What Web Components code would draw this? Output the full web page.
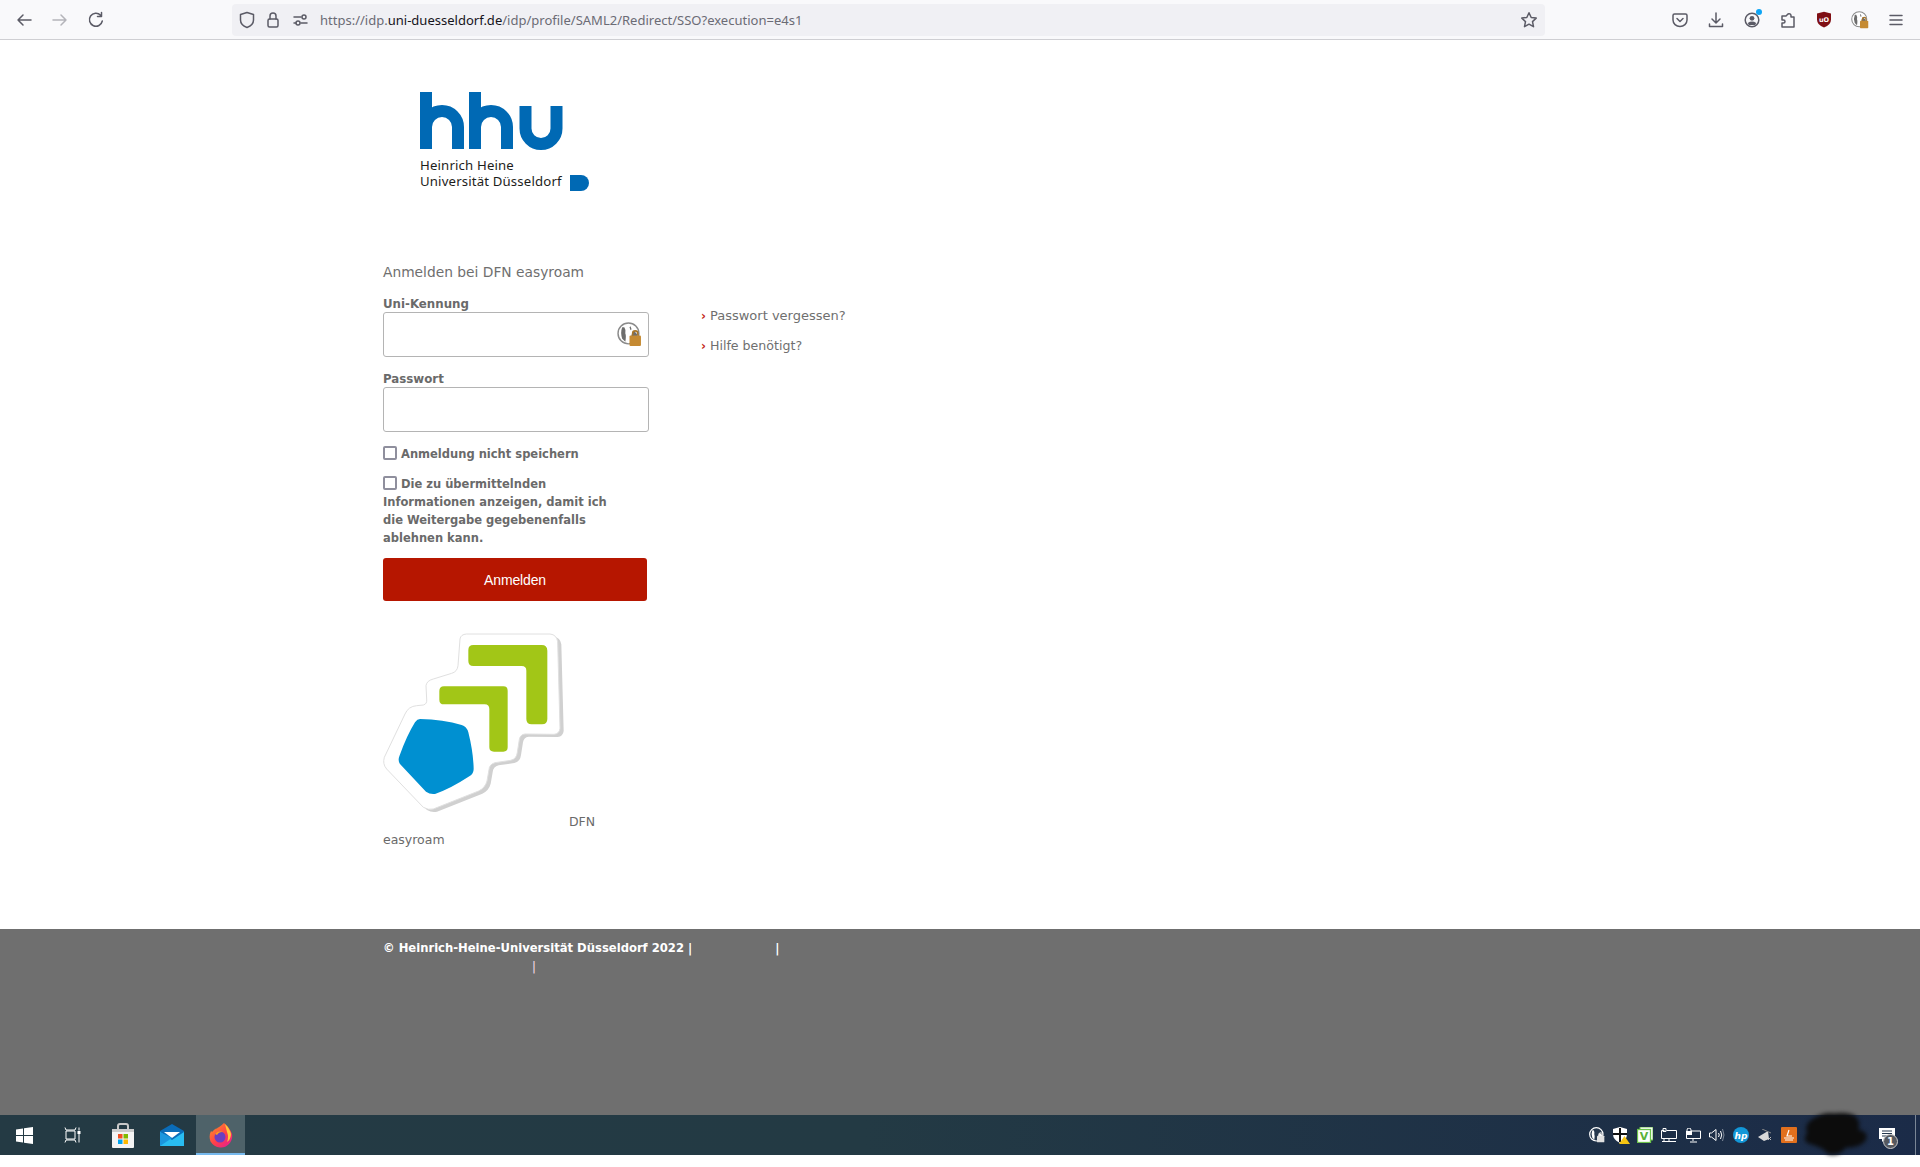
<!DOCTYPE html>
<html lang="de"><head><meta charset="utf-8"><title>Anmelden bei DFN easyroam</title>
<style>
html,body{margin:0;padding:0;background:#fff}
body{width:1920px;height:1167px;display:flex;flex-direction:column;overflow:hidden;font-family:"DejaVu Sans",Verdana,sans-serif}
</style></head><body>
<browser-toolbar></browser-toolbar>
<login-page>
  <hhu-logo></hhu-logo>
  <login-panel></login-panel>
</login-page>
<page-footer></page-footer>
<win-taskbar></win-taskbar>
<script>
function def(name, html){
  customElements.define(name, class extends HTMLElement{
    constructor(){super();const s=this.attachShadow({mode:'open'});const t=document.createElement('template');t.innerHTML=html;s.appendChild(t.content.cloneNode(true));}
  });
}
const S='fill="none" stroke="#5b5b66" stroke-width="1.5" stroke-linecap="round" stroke-linejoin="round"';
const lockPerson=(w)=>`<svg width="${w}" height="${w}" viewBox="0 0 24 24"><circle cx="11" cy="11" r="10" fill="#fff" stroke="#8b8b8b" stroke-width="1.4"/><path d="M5 5q-2 5 0 11l3 3q1-6 0-8q1-3-1-6zM13 4l1 3-1 1-1-3zM15 9q4 0 5 5v2h-7z" fill="#6d6d6d"/><rect x="12" y="13" width="11" height="10" rx="1" fill="#c58a32"/><path d="M15 13v-2a2.500 2.500 0 0 1 5 0v2" fill="none" stroke="#a87426" stroke-width="1.5"/></svg>`;

def('browser-toolbar',`<style>
:host{display:flex;flex:none;height:39px;background:#f9f9fb;border-bottom:1px solid #cfcfd3;align-items:center;box-sizing:content-box}
svg{display:block;flex:none}
.nav{display:flex;width:232px;padding-left:15px;box-sizing:border-box;gap:18px;align-items:center}
.url{flex:none;width:1313px;height:32px;background:#f0f0f4;border-radius:4px;display:flex;align-items:center;padding:0 0 0 7px;box-sizing:border-box}
.url .t{font:13.030px "Noto Sans",sans-serif;color:#6b6b75;margin-left:12px;white-space:nowrap}
.url b{font-weight:400;color:#15141a}
.url .star{margin-left:auto;margin-right:7px}
.right{flex:1;display:flex;padding-left:125px;gap:16px;align-items:center}
.right span{width:20px;height:20px;display:flex;justify-content:center;align-items:center;position:relative}
.dot{position:absolute;right:0;top:-1px;width:6px;height:6px;border-radius:50%;background:#0ea5f5}
</style>
<div class="nav">
<svg width="18" height="18" viewBox="0 0 18 18" ${S}><path d="M16 9H3M8 4 3 9l5 5"/></svg>
<svg width="18" height="18" viewBox="0 0 18 18" fill="none" stroke="#b4b4ba" stroke-width="1.5" stroke-linecap="round" stroke-linejoin="round"><path d="M2 9h13M10 4l5 5-5 5"/></svg>
<svg width="18" height="18" viewBox="0 0 18 18" ${S}><path d="M13.600 4.200A6.500 6.500 0 1 0 15.300 10M14.500 1.500v4h-4"/></svg>
</div>
<div class="url">
<svg width="16" height="18" viewBox="0 0 16 18" ${S} style="margin-right:12px"><path d="M8 1.500 14.500 3.500v5.500q0 5-6.500 7.500Q1.500 14 1.500 9V3.500z"/></svg>
<svg width="12" height="16" viewBox="0 0 12 16" ${S} style="margin-right:14px"><rect x="1" y="7" width="10" height="8" rx="1.500"/><path d="M3 7V4a3 3 0 0 1 6 0v3"/></svg>
<svg width="15" height="12" viewBox="0 0 15 12" ${S} stroke-width="1.200"><path d="M1 3h7M1 9h2M8 9h6"/><circle cx="11" cy="3" r="2"/><circle cx="5" cy="9" r="2"/></svg>
<span class="t">https://idp.<b>uni-duesseldorf.de</b>/idp/profile/SAML2/Redirect/SSO?execution=e4s1</span>
<svg class="star" width="18" height="18" viewBox="0 0 18 18" ${S}><path d="m9 1.800 2.200 4.700 5 .6-3.700 3.500 1 5.100L9 13.200l-4.500 2.500 1-5.100L1.800 7.100l5-.6z"/></svg>
</div>
<div class="right">
<span><svg width="16" height="16" viewBox="0 0 16 16" ${S}><path d="M2.500 2h11q1.500 0 1.500 1.500V8a7 6.500 0 0 1-14 0V3.500Q1 2 2.500 2zM5 6.500l3 3 3-3"/></svg></span>
<span><svg width="16" height="16" viewBox="0 0 16 16" ${S}><path d="M8 1v9.500M4 7l4 4 4-4M1.500 12v2.500h13V12"/></svg></span>
<span><svg width="16" height="16" viewBox="0 0 16 16"><circle cx="8" cy="8" r="6.800" fill="none" stroke="#5b5b66" stroke-width="1.500"/><circle cx="8" cy="6.300" r="2.400" fill="#5b5b66"/><path d="M3.800 11q4.200-2.800 8.400 0l-1 2H4.800z" fill="#5b5b66"/></svg><i class="dot"></i></span>
<span><svg width="16" height="16" viewBox="0 0 16 16" ${S}><path d="M6 4H2v4h1.500a1.500 1.500 0 0 1 0 3H2v4h12V5h-3V3.500a2 2 0 0 0-3-1.500L6 4z"/></svg></span>
<span><svg width="16" height="17" viewBox="0 0 16 17"><path d="M8 .8 15 2.500v6q0 5.500-7 8-7-2.500-7-8v-6z" fill="#7f0f14"/><text x="8" y="10.500" text-anchor="middle" font-family="DejaVu Sans" font-size="6.500" font-weight="700" fill="#fff">uO</text></svg></span>
<span>${lockPerson(18)}</span>
<span><svg width="14" height="12" viewBox="0 0 14 12" ${S}><path d="M1 1.500h12M1 6h12M1 10.500h12"/></svg></span>
</div>`);

def('login-page',`<style>
:host{display:block;flex:none;height:889px;box-sizing:border-box;padding-left:383px}
</style><slot></slot>`);

def('hhu-logo',`<style>
:host{display:block;padding:52px 0 0 37px;height:171px;box-sizing:content-box}
.row{display:flex;align-items:flex-end;gap:8px;margin-top:6px}
.t{font:13.200px/16px "Noto Sans",sans-serif;color:#1d1d1b;letter-spacing:.16px;white-space:nowrap}
svg{display:block}
.d{margin-bottom:-2px}
</style>
<svg width="143" height="59" viewBox="0 0 143 59" fill="none" stroke="#0069b4" stroke-width="12"><path d="M6 0V57M6 35A16 16 0 0 1 38 35V57M55 0V57M55 35A16 16 0 0 1 87 35V57M105.500 14V36.500A15.500 15.500 0 0 0 136.500 36.500V14"/></svg>
<div class="row"><div class="t">Heinrich Heine<br>Universität Düsseldorf</div>
<svg class="d" width="19" height="16" viewBox="0 0 19 16"><path d="M0 0H11A8 8 0 0 1 11 16H0z" fill="#0069b4"/></svg></div>`);

def('login-panel',`<style>
:host{display:block;color:#6a6a6a}
h1{font-size:13.800px;line-height:18px;font-weight:400;margin:0 0 14px;color:#6f6f6f}
.cols{display:flex}
.form{width:266px;flex:none}
.links{margin-left:52px;padding-top:12px}
</style>
<h1>Anmelden bei DFN easyroam</h1>
<div class="cols"><div class="form">
<text-field label="Uni-Kennung" data-lock></text-field>
<text-field label="Passwort" type="password"></text-field>
<check-field text="Anmeldung nicht speichern"></check-field>
<check-field text="Die zu übermittelnden Informationen anzeigen, damit ich die Weitergabe gegebenenfalls ablehnen kann." style="margin-bottom:11px"></check-field>
<login-button></login-button>
<easyroam-logo></easyroam-logo>
</div>
<div class="links"><help-links></help-links></div></div>`);

customElements.define('text-field',class extends HTMLElement{constructor(){super();const s=this.attachShadow({mode:'open'});
const lab=this.getAttribute('label'),typ=this.getAttribute('type')||'text',lk=this.hasAttribute('data-lock');
s.innerHTML=`<style>
:host{display:block;margin-bottom:13px}
label{display:block;font:700 11.800px/18px "DejaVu Sans",sans-serif;color:#6a6a6a;height:18px;margin-bottom:-1px}
.b{position:relative;height:45px}
input{display:block;width:266px;height:45px;box-sizing:border-box;border:1px solid #b4b4b4;border-radius:3px;background:#fff;margin:0;padding:0 8px;outline:none}
.i{position:absolute;right:7px;top:10px}
</style><label>${lab}</label><div class="b"><input type="${typ}">${lk?`<div class="i">${lockPerson(25)}</div>`:''}</div>`;}});

customElements.define('check-field',class extends HTMLElement{constructor(){super();const s=this.attachShadow({mode:'open'});
s.innerHTML=`<style>
:host{display:block;width:230px;margin-bottom:12px}
div{font:700 11.500px/18px "DejaVu Sans",sans-serif;color:#6a6a6a}
input{appearance:none;-webkit-appearance:none;width:14px;height:14px;box-sizing:border-box;border:2px solid #8f8f9d;border-radius:2px;background:#fff;margin:0 4px 0 0;vertical-align:-2px}
</style><div><input type="checkbox">${this.getAttribute('text')}</div>`;}});

def('login-button',`<style>
:host{display:block;margin-bottom:32px}
button{display:block;width:264px;height:43px;border:0;border-radius:3px;background:#b61600;color:#fff;font:14px "Liberation Sans",sans-serif;letter-spacing:-.15px;padding:0;margin:0}
</style><button>Anmelden</button>`);

const er="M270 60Q272 46 290 45L540 45Q560 47 563 68L570 328Q568 345 552 346L465 345Q450 347 448 362L442 400Q440 420 422 424L375 431Q358 436 357 452L351 486Q346 506 326 516L190 570Q175 574 160 565L50 450Q37 435 43 415L105 285Q115 262 140 260L160 258Q172 255 170 240L168 200Q170 185 190 180L245 163Q262 158 264 140Z";
def('easyroam-logo',`<style>
:host{display:block;font:12.500px/18px "DejaVu Sans",sans-serif;color:#6a6a6a}
svg{display:inline;vertical-align:baseline}
</style><svg width="182" height="193" viewBox="39 42 546 579"><g>
<path d="${er}" fill="#d0d0d0" transform="translate(11 8)"/>
<path d="${er}" fill="#fff" stroke="#e0e0e0" stroke-width="3"/>
<path d="M310 78H515Q532 78 532 95V300Q532 316 516 316H485Q469 316 469 300V155Q469 141 455 141H310Q295 141 295 126V93Q295 78 310 78Z" fill="#a2c617"/>
<path d="M222 202H400Q413 202 413 215V385Q413 398 400 398H372Q358 398 358 385V270Q358 256 344 256H222Q208 256 208 242V216Q208 202 222 202Z" fill="#a2c617"/>
<path d="M150 300Q220 302 275 318Q290 322 295 340Q310 400 311 450Q311 465 298 472Q240 510 195 525Q180 527 168 518L90 435Q83 425 88 412Q110 350 135 310Q142 300 150 300Z" fill="#0090d1"/>
</g></svg> DFN easyroam`);

def('help-links',`<style>
:host{display:block;font:13px/18px "DejaVu Sans",sans-serif;color:#6f6f6f}
div{margin-bottom:12px;white-space:nowrap}
.s{font-size:12.600px}
i{font-style:normal;font-weight:700;color:#c4281b;margin-right:4px;font-size:12px;line-height:1}
</style><div><i>›</i>Passwort vergessen?</div><div class="s"><i>›</i>Hilfe benötigt?</div>`);

def('page-footer',`<style>
:host{display:block;flex:none;height:186px;background:#6f6f6f;box-sizing:border-box;padding:11px 0 0 383px;color:#fff;font:700 11.600px/17.500px "DejaVu Sans",sans-serif}
.w{width:400px}
.g{display:inline-block;width:83px}
.h{display:inline-block;width:149px}
.p{font-weight:400;color:#f8dcec}
</style><div class="w">© Heinrich-Heine-Universität Düsseldorf 2022 |<span class="g"></span>|<br><span class="h"></span><span class="p">|</span></div>`);

def('win-taskbar',`<style>
:host{display:flex;flex:none;height:40px;background:linear-gradient(90deg,#243a44 0,#233a44 45%,#1b2b48 100%);position:relative;align-items:center;margin-bottom:12px}
svg{display:block}
.c{width:49px;height:40px;display:flex;align-items:center;justify-content:center;box-sizing:border-box;flex:none}
.c.a{background:#4e6269;border-bottom:2px solid #76b9ed;padding-top:2px}
.tray{margin-left:auto;display:flex;align-items:center;height:40px}
.tray span{width:24px;height:40px;display:flex;align-items:center;justify-content:center}
.note{width:36px;margin-left:68px;height:40px;display:flex;align-items:center;justify-content:center;position:relative}
.bar{width:1px;height:40px;background:#7a8696;margin:0 4px 0 10px}
.n{position:absolute;left:14px;top:19px;width:15px;height:15px;border-radius:50%;background:#55585f;border:1px solid #c9c9c9;box-sizing:border-box;color:#fff;font:700 10px/13px "DejaVu Sans",sans-serif;text-align:center}
.scrib{position:absolute;left:1800px;top:-8px;filter:blur(2px)}
</style>
<div class="c"><svg width="17" height="17" viewBox="0 0 17 17" fill="#fff"><path d="M0 2.500 7 1.500V8H0zM8 1.300 17 0V8H8zM0 9h7v6.500l-7-1zM8 9h9v8l-9-1.300z"/></svg></div>
<div class="c" style="padding-right:2px"><svg width="17" height="16" viewBox="0 0 17 16" fill="none" stroke="#fff" stroke-width="1"><path d="M1 .5 2 3h9l1-2.500M2 4h9v8H2zM1 15.500 2 13h9l1 2.500M15 .5v3M15 7v8.500"/><rect x="13.500" y="4" width="3" height="3" fill="#fff" stroke="none"/></svg></div>
<div class="c"><svg width="24" height="25" viewBox="0 0 24 25"><path d="M7 6V3q0-2 2-2h6q2 0 2 2v3" fill="none" stroke="#c8c8c8" stroke-width="2"/><path d="M1 6h22v18q0 1-1 1H2q-1 0-1-1z" fill="#f4f4f4"/><rect x="1" y="6" width="22" height="3" fill="#ccc"/><rect x="7" y="11" width="4.500" height="4.500" fill="#f25022"/><rect x="12.500" y="11" width="4.500" height="4.500" fill="#7fba00"/><rect x="7" y="16.500" width="4.500" height="4.500" fill="#00a4ef"/><rect x="12.500" y="16.500" width="4.500" height="4.500" fill="#ffb900"/></svg></div>
<div class="c"><svg width="24" height="22" viewBox="0 0 24 22"><path d="M12 0 24 7v15H0V7z" fill="#0a6cb8"/><path d="M4 8h16l-8 6z" fill="#fff"/><path d="M0 8l12 8 12-8v14H0z" fill="#29bdf2"/><path d="M0 22 12 14 0 8z" fill="#1b96dd"/></svg></div>
<div class="c a"><svg width="24" height="25" viewBox="0 0 24 25"><defs><linearGradient id="f" x1="0" y1="0" x2=".8" y2="1"><stop offset="0" stop-color="#ff9a1f"/><stop offset=".6" stop-color="#ff3f4a"/><stop offset="1" stop-color="#e5208d"/></linearGradient></defs><path d="M15 0q6 5 8 11 1 6-3 10-4 4-9 3.500-6-.5-9.500-6Q-.5 13 2 8l1 1q2-3 6-4-2 0-3.500 1Q10 5 15 0z" fill="url(#f)"/><path d="M16 1q5 5 6 10 0 5-4 8 2-5 0-10-1-4-2-8z" fill="#ffc73a"/><circle cx="11" cy="14" r="5.500" fill="#6a3fc1"/><path d="M6 11q3-4 8-2-4-.5-6 3z" fill="#ff9a1f"/></svg></div>
<div class="tray">
<span><svg width="16" height="16" viewBox="0 0 24 24"><circle cx="11" cy="11" r="10" fill="#26384e" stroke="#fff" stroke-width="1.800"/><path d="M5 5q-2 5 0 11l3 3q1-6 0-8q1-3-1-6zM15 9q4 0 5 5v2h-7z" fill="#fff"/><rect x="12" y="13" width="11" height="10" rx="1" fill="#e0e0e0"/><path d="M15 13v-2a2.500 2.500 0 0 1 5 0v2" fill="none" stroke="#e0e0e0" stroke-width="1.500"/></svg></span>
<span><svg width="17" height="17" viewBox="0 0 17 17"><path d="M7 0 14 2v5q0 6-7 9-7-3-7-9V2z" fill="#fff"/><path d="M6 1h2v14H6zM0 6h14v2H0z" fill="#111"/><path d="M11.500 9 17 17H6z" fill="#f7c511"/></svg></span>
<span><svg width="16" height="16" viewBox="0 0 16 16"><rect x="3" y="0" width="13" height="13" fill="#fff" stroke="#6cc24a"/><rect x=".5" y="2.500" width="13" height="13" fill="#fff" stroke="#6cc24a" stroke-width="1.300"/><text x="7" y="13" text-anchor="middle" font-family="DejaVu Sans" font-weight="700" font-size="11" fill="#5ab23a">V</text></svg></span>
<span><svg width="16" height="15" viewBox="0 0 16 15" fill="none" stroke="#fff"><path d="M.5 2.500h3M5.500 2.500h10v8H.5v-8M2 .5h3v3H2zM8 10.500V13M1 13.500h14M3 10.500V13"/></svg></span>
<span><svg width="15" height="15" viewBox="0 0 15 15"><path d="M5 3H14.500V10.500H.5V7" fill="none" stroke="#fff"/><path d="M7 11v2M4 14h7" stroke="#fff"/><rect x="0" y="3" width="6" height="4" fill="#fff"/><path d="M1 3V2a2 2 0 0 1 4 0v1" fill="none" stroke="#fff"/></svg></span>
<span><svg width="16" height="14" viewBox="0 0 16 14" fill="none" stroke="#fff"><path d="M.5 5h2L7 1.500v11L2.500 9h-2zM9.500 5q1.500 2 0 4M11.500 3q2.500 4 0 8"/><path d="M13.500 1q3 6 0 12" stroke="#7f8a99"/></svg></span>
<span><svg width="16" height="16" viewBox="0 0 16 16"><circle cx="8" cy="8" r="8" fill="#1297d8"/><text x="8" y="11.500" text-anchor="middle" font-family="DejaVu Sans" font-style="italic" font-weight="700" font-size="9" fill="#fff">hp</text></svg></span>
<span><svg width="16" height="13" viewBox="0 0 16 13"><path d="M1 8 11 2l1 8-5 2z" fill="#d9d9d9"/><path d="M5 0l9 4" stroke="#888"/><path d="M11 8l3 3m0-3-3 3" stroke="#bbb"/></svg></span>
<span><svg width="16" height="16" viewBox="0 0 16 16"><rect width="16" height="16" rx="1" fill="#e2701d"/><path d="M3 11h10M4 13h8M8 3 6 9h5" stroke="#fff" fill="none" stroke-width="1.200"/></svg></span>
</div>
<div class="note"><svg width="16" height="14" viewBox="0 0 16 14"><path d="M0 0h16v11H6l-3 3v-3H0z" fill="#fff"/><path d="M3 3h10M3 5.500h10M3 8h7" stroke="#26384e"/></svg><span class="n">1</span></div>
<div class="bar"></div>
<svg class="scrib" width="72" height="58" viewBox="0 0 80 58"><path d="M14 10q12-8 24-6 12-2 22 2 8 6 5 16 12 2 8 12-6 8-22 8-8 10-20 7-4-6-16-10Q0 36 8 26 4 16 14 10z" fill="#0c0c0c"/></svg>`);
</script>
</body></html>
